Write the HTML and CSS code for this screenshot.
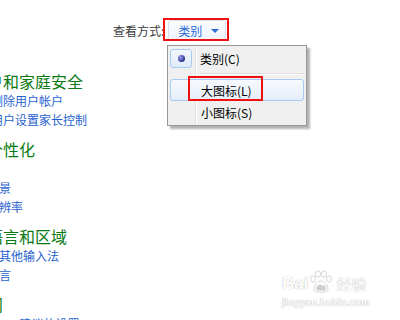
FILE: index.html
```html
<!DOCTYPE html>
<html lang="zh-CN">
  <head>
    <meta charset="UTF-8" />
    <title>控制面板</title>
    <link rel="stylesheet" href="styles.css">
  </head>
  <body>
    <!-- View switcher -->
    <div class="toolbar">
      <span class="view-label">查看方式:</span>
      <div class="view-btn">
        <span>类别</span>
        <span class="arrow"></span>
      </div>
    </div>

    <!-- Category list (scrolled, left part cut off) -->
    <div class="categories">
      <div class="section">
        <div class="title">用户帐户和家庭安全</div>
        <div class="link shield">添加或删除用户帐户</div>
        <div class="link shield">为所有用户设置家长控制</div>
      </div>
      <div class="section">
        <div class="title">外观和个性化</div>
        <div class="link">更改主题</div>
        <div class="link">更改桌面背景</div>
        <div class="link">调整屏幕分辨率</div>
      </div>
      <div class="section">
        <div class="title">时钟、语言和区域</div>
        <div class="link">更改键盘或其他输入法</div>
        <div class="link">更改显示语言</div>
      </div>
      <div class="section">
        <div class="title">轻松访问</div>
        <div class="link">使用 Windows 建议的设置</div>
      </div>
    </div>

    <!-- Dropdown menu -->
    <div class="menu">
      <div class="menu-item checked">
        <span class="gutter"><span class="bullet"></span></span>
        <span>类别(C)</span>
      </div>
      <div class="menu-sep"></div>
      <div class="menu-item hover">
        <span class="gutter"></span>
        <span>大图标(L)</span>
      </div>
      <div class="menu-item">
        <span class="gutter"></span>
        <span>小图标(S)</span>
      </div>
    </div>

    <!-- Red annotation boxes -->
    <div class="mark mark-btn"></div>
    <div class="mark mark-item"></div>

    <!-- Watermark -->
    <div class="watermark">
      <div class="wm-top">
        <span>Bai</span>
        <svg class="paw" width="26" height="24" viewBox="0 0 26 24">
          <g fill="#fff" stroke="#d6d6d6" stroke-width="1">
            <ellipse cx="5" cy="9" rx="2.5" ry="3.2" />
            <ellipse cx="10" cy="4" rx="2.5" ry="3.2" />
            <ellipse cx="16" cy="4" rx="2.5" ry="3.2" />
            <ellipse cx="21" cy="9" rx="2.5" ry="3.2" />
            <path d="M6 20 C6 14 10 11 13 11 C16 11 20 14 20 20 C20 23 6 23 6 20 Z" />
          </g>
          <text x="13" y="20" font-size="7" text-anchor="middle" fill="#fff" stroke="#d0d0d0" stroke-width="0.4" font-family="Liberation Sans, sans-serif">du</text>
        </svg>
        <span class="wm-cn">经验</span>
      </div>
      <div class="wm-url">jingyan.baidu.com</div>
    </div>
  </body>
</html>
```

FILE: styles.css
```css
body {
  margin: 0;
  width: 400px;
  height: 320px;
  overflow: hidden;
  position: relative;
  background-color: #fff;
  font-family: "Noto Sans CJK SC", "Liberation Sans", sans-serif;
  font-size: 12px;
}

/* Toolbar */
.toolbar {
  display: flex;
  align-items: center;
  padding: 20px 0 0 113px;
  height: 21px;
}

.view-label {
  color: #3b3b3b;
  margin-right: 4px;
}

.view-btn {
  box-sizing: border-box;
  width: 58px;
  height: 21px;
  display: flex;
  align-items: center;
  padding-left: 9px;
  gap: 9px;
  border: 1px solid #d6e2ef;
  border-radius: 3px;
  background: linear-gradient(#fbfdff, #eef4fb);
  color: #2a6bd6;
}

.arrow {
  width: 0;
  height: 0;
  border-left: 4px solid transparent;
  border-right: 4px solid transparent;
  border-top: 4px solid #2a6bd6;
}

/* Category list */
.categories {
  margin-left: -61px;
  padding-top: 31px;
}

.section {
  margin-bottom: 11px;
}

.title {
  color: #0b7a12;
  font-size: 16px;
  line-height: 19px;
  white-space: nowrap;
}

.link {
  color: #1f62cf;
  line-height: 19px;
  white-space: nowrap;
}

.link.shield {
  padding-left: 16px;
}

/* Dropdown menu */
.menu {
  position: absolute;
  left: 167px;
  top: 45px;
  width: 138px;
  padding: 1px 0 2px;
  border: 1px solid #979797;
  background-color: #f0f0f0;
  box-shadow: 3px 3px 2px rgba(0, 0, 0, 0.3);
  background-image: linear-gradient(to right, transparent 27px, #e2e3e3 27px, #e2e3e3 28px, #fff 28px, #fff 29px, transparent 29px);
}

.menu-item {
  box-sizing: border-box;
  height: 22px;
  margin: 0 2px;
  display: flex;
  align-items: center;
  color: #000;
  border: 1px solid transparent;
  border-radius: 3px;
}

.menu-item .gutter {
  width: 30px;
  display: flex;
  justify-content: center;
}

.menu-item.checked .gutter {
  box-sizing: border-box;
  width: 22px;
  height: 19px;
  margin: 0 8px 0 -1px;
  align-items: center;
  border: 1px solid #a8cbf1;
  border-radius: 3px;
  background: linear-gradient(#f2f7fd, #e0ebfa);
}

.bullet {
  width: 7px;
  height: 7px;
  border-radius: 50%;
  background: radial-gradient(circle at 35% 35%, #9aa3e8, #2b2f8f 70%);
}

.menu-item.hover {
  border-color: #a8cbf1;
  background: linear-gradient(#f6f9fd, #e6eefa);
}

.menu-sep {
  height: 1px;
  margin: 4px 0 4px 30px;
  background-color: #e0e0e0;
  border-bottom: 1px solid #fff;
}

/* Red annotation boxes */
.mark {
  position: absolute;
  border: 2px solid #ee1111;
  box-sizing: border-box;
}

.mark-btn {
  left: 163px;
  top: 18px;
  width: 66px;
  height: 23px;
}

.mark-item {
  left: 188px;
  top: 76px;
  width: 75px;
  height: 25px;
}

/* Watermark */
.watermark {
  position: absolute;
  left: 282px;
  top: 270px;
  color: #fff;
  text-shadow: 0 0 1px #bdbdbd, 0 0 1px #bdbdbd;
  font-family: "Liberation Sans", sans-serif;
}

.wm-top {
  display: flex;
  align-items: flex-end;
  font-size: 17px;
  font-weight: bold;
  line-height: 20px;
}

.wm-cn {
  font-family: "Noto Sans CJK SC", sans-serif;
  font-size: 15px;
  font-weight: normal;
  margin-left: 2px;
}

.wm-url {
  font-size: 10px;
  font-weight: bold;
  margin-top: 3px;
}
```
